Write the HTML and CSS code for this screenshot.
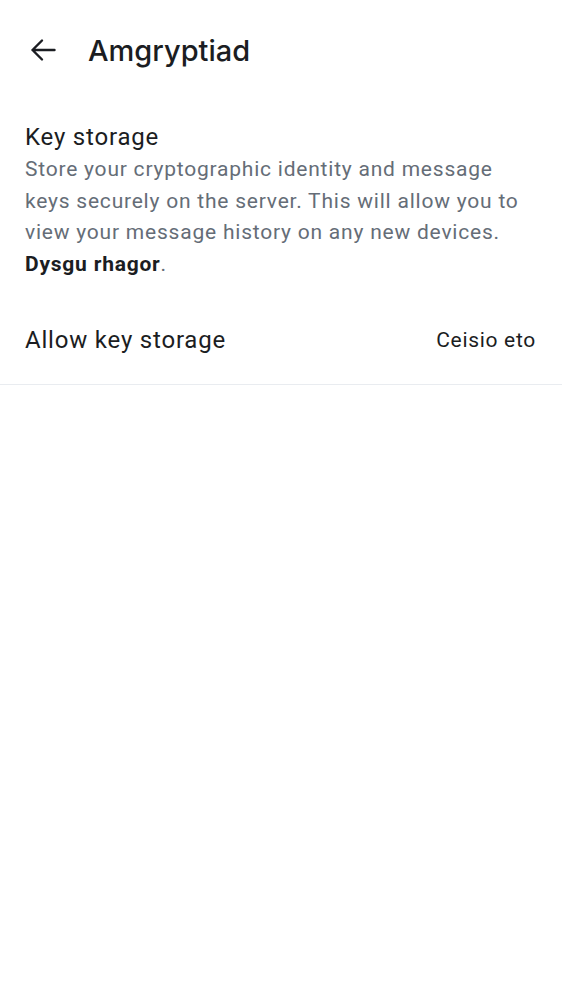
FILE: index.html
```html
<!DOCTYPE html>
<html>
<head>
<meta charset="utf-8">
<link rel="stylesheet" href="styles.css">
</head>
<body>
<header class="topbar">
  <button class="back" aria-label="Back">
    <svg width="26" height="24" viewBox="0 0 26 24"><path d="M24.5 12H2.5M12 2.5L2.5 12L12 21.5" fill="none" stroke="#1b1d22" stroke-width="2.4" stroke-linecap="round" stroke-linejoin="round"/></svg>
  </button>
  <h1 class="title">Amgryptiad</h1>
</header>
<section class="info">
  <div class="info-title">Key storage</div>
  <p class="info-desc">Store your cryptographic identity and message keys securely on the server. This will allow you to view your message history on any new devices. <b>Dysgu rhagor</b>.</p>
</section>
<div class="row">
  <span class="row-label">Allow key storage</span>
  <span class="row-action">Ceisio eto</span>
</div>
```
FILE: styles.css
```css
* { box-sizing: border-box; }
body {
  margin: 0;
  background: #fff;
  font-family: Roboto, "Noto Sans", sans-serif;
  color: #1b1d22;
}
.topbar {
  display: flex;
  align-items: center;
  height: 100px;
  padding-left: 30px;
}
.back {
  border: 0;
  background: none;
  padding: 0;
  width: 26px;
  height: 26px;
  display: flex;
  align-items: center;
  justify-content: center;
}
.title {
  margin: 0 0 0 32px;
  font-family: Inter, sans-serif;
  font-weight: 500;
  font-size: 29px;
  color: #1b1d22;
}
.info {
  padding: 20px 25px 16px;
}
.info-title {
  font-size: 24px;
  line-height: 34px;
  letter-spacing: 0.8px;
}
.info-desc {
  margin: 0;
  font-size: 21px;
  line-height: 31.5px;
  letter-spacing: 0.78px;
  color: #656d77;
}
.info-desc b {
  color: #1b1d22;
  font-weight: 700;
}
.row {
  display: flex;
  justify-content: space-between;
  align-items: center;
  height: 89px;
  padding: 0 26px 0 25px;
  border-bottom: 1px solid #e9ecf0;
}
.row-label { font-size: 24px; letter-spacing: 0.8px; }
.row-action { font-size: 21px; letter-spacing: 0.7px; }
```
